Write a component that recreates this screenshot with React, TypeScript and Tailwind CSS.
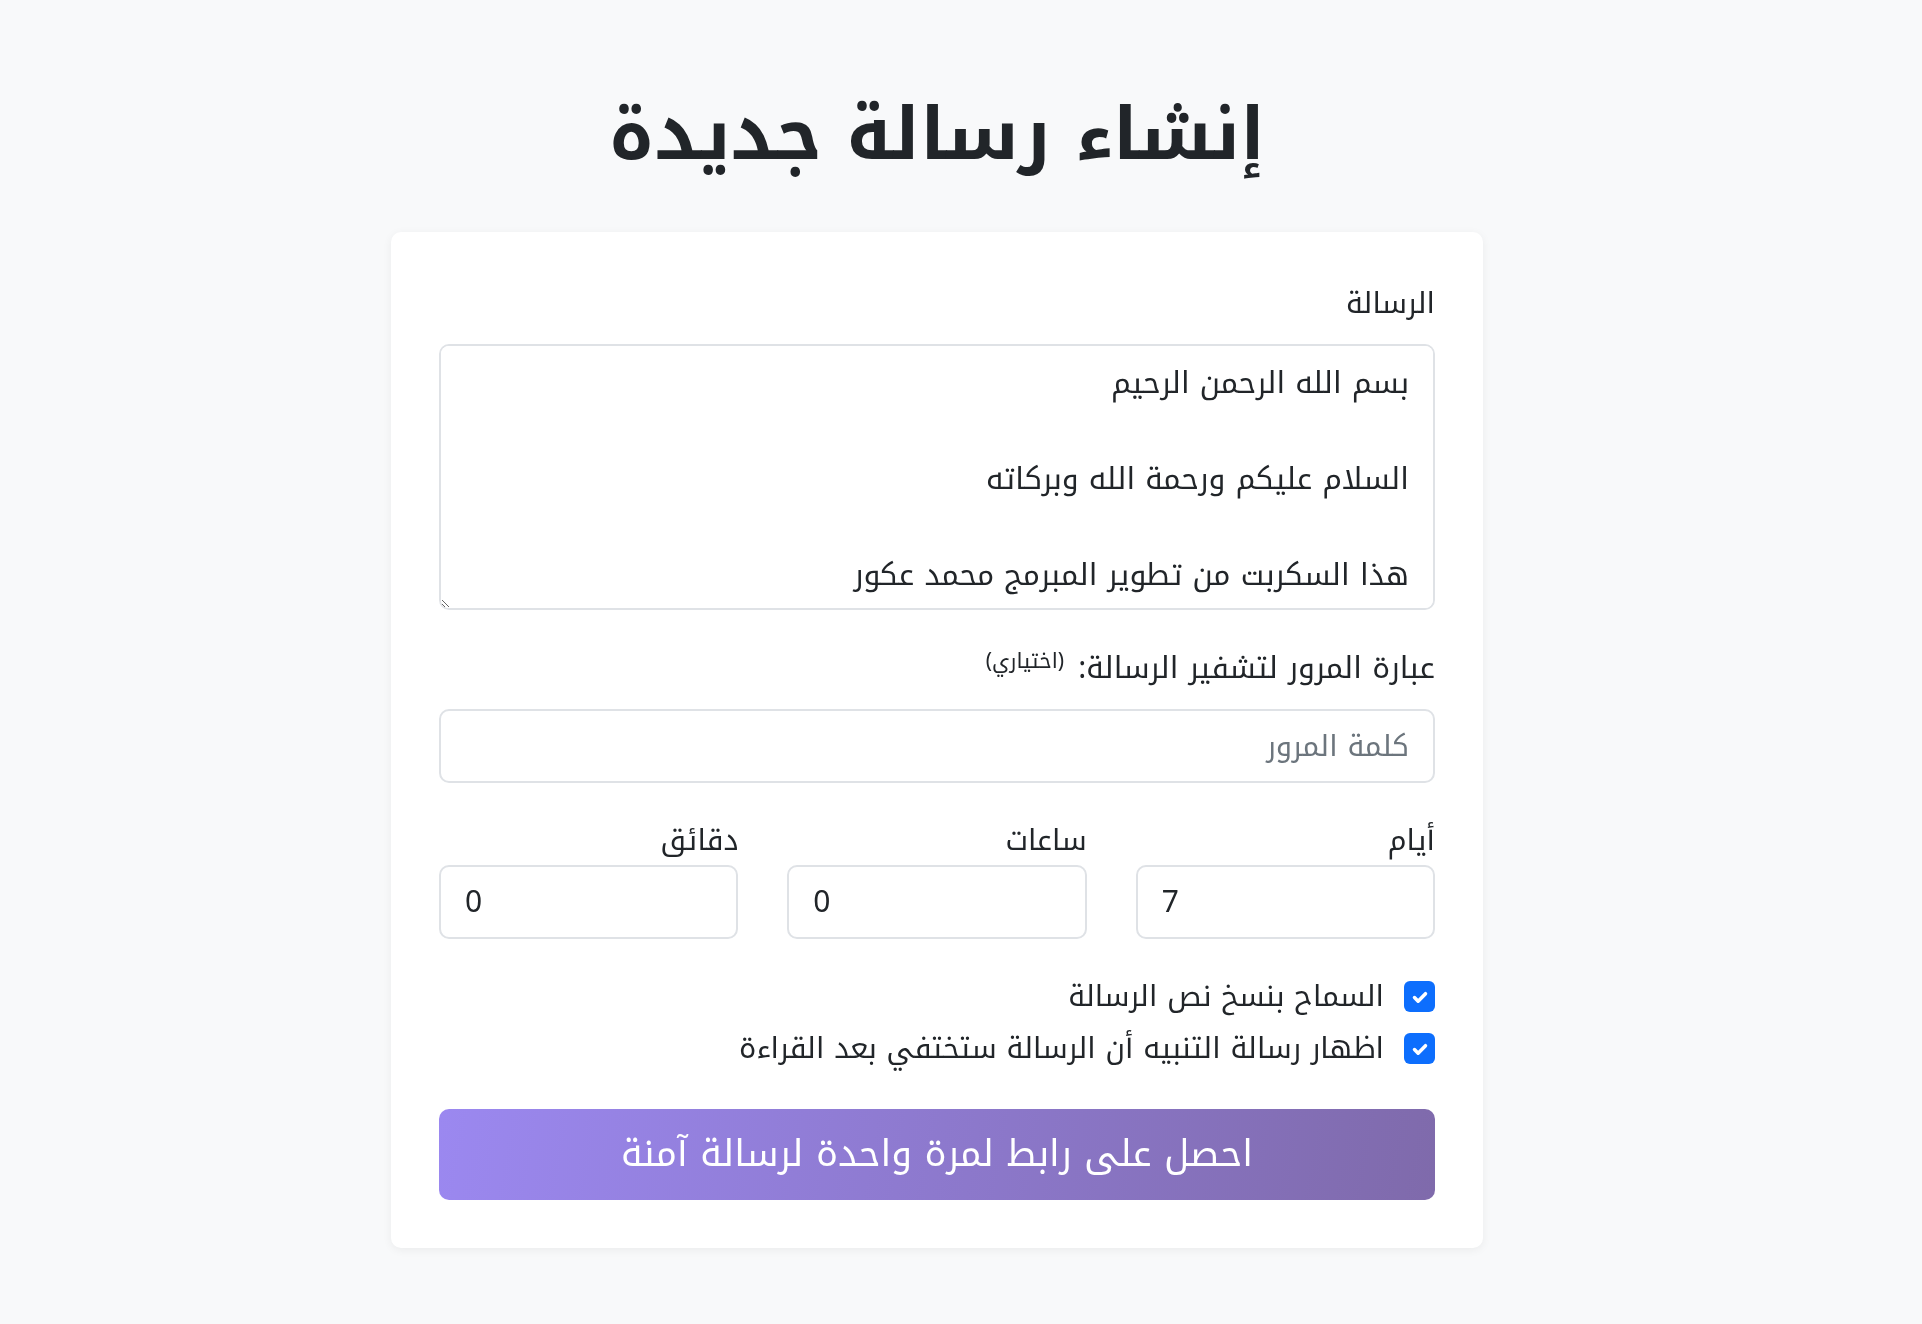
import React from "react";

const FONT = "font-['Noto_Kufi_Arabic','Noto_Sans_Arabic','DejaVu_Sans',sans-serif]";

function Check() {
  return (
    <span className="flex h-[31px] w-[31px] shrink-0 items-center justify-center rounded-[6px] bg-[#0d6efd]">
      <svg width="22" height="22" viewBox="0 0 20 20" fill="none">
        <path d="M5 10.5l3.3 3.3L15 7" stroke="#fff" strokeWidth="3.2" strokeLinecap="round" strokeLinejoin="round" />
      </svg>
    </span>
  );
}

export default function App() {
  const message = "بسم الله الرحمن الرحيم\n\nالسلام عليكم ورحمة الله وبركاته\n\nهذا السكربت من تطوير المبرمج محمد عكور";
  return (
    <div dir="rtl" className={`min-h-screen bg-[#f8f9fa] text-[#212529] ${FONT}`}>
      <div className="ml-0 mr-auto w-[1874px]">
        <h1 className="pt-[92px] text-center text-[72px] font-bold leading-[86px] text-[#212529]">إنشاء رسالة جديدة</h1>
        <div className="mx-auto mt-[54px] w-[1092px] rounded-[10px] bg-white px-[48px] pb-[48px] pt-[52px] shadow-[0_2px_10px_rgba(0,0,0,0.06)]">
          <label className="block text-[29px] leading-[40px]">الرسالة</label>
          <textarea
            readOnly
            defaultValue={message}
            className="mt-[20px] block h-[266px] w-full resize-y rounded-[10px] border-2 border-[#dfe2e6] bg-white px-[24px] pb-[11px] pt-[13px] text-[30px] leading-[48px] text-[#212529] outline-none"
          />
          <label className="mt-[38px] block text-[30px] leading-[40px]">
            عبارة المرور لتشفير الرسالة:{" "}
            <sup className="mr-[4px] text-[21px]">(اختياري)</sup>
          </label>
          <input
            type="password"
            placeholder="كلمة المرور"
            className="mt-[21px] block h-[74px] w-full rounded-[10px] border-2 border-[#dfe2e6] bg-white px-[24px] text-[29px] text-[#212529] outline-none placeholder:text-[#6c757d]"
          />
          <div className="mt-[38px] grid grid-cols-3 gap-x-[49px]">
            {[
              ["أيام", "7"],
              ["ساعات", "0"],
              ["دقائق", "0"],
            ].map(([label, val]) => (
              <div key={label}>
                <label className="block text-[29px] leading-[40px]">{label}</label>
                <input
                  type="number"
                  dir="ltr"
                  defaultValue={val}
                  className="mt-[4px] block h-[74px] w-full rounded-[10px] border-2 border-[#dfe2e6] bg-white px-[24px] text-left text-[30px] text-[#212529] outline-none"
                />
              </div>
            ))}
          </div>
          <div className="mt-[42px] flex flex-col gap-[21px]">
            <div className="flex items-center gap-[20px]">
              <Check />
              <span className="text-[29px] leading-[31px]">السماح بنسخ نص الرسالة</span>
            </div>
            <div className="flex items-center gap-[20px]">
              <Check />
              <span className="text-[29px] leading-[31px]">اظهار رسالة التنبيه أن الرسالة ستختفي بعد القراءة</span>
            </div>
          </div>
          <button className="mt-[45px] block h-[91px] w-full rounded-[10px] bg-[linear-gradient(100deg,#9b88f0,#7f6aab)] text-[37px] text-white">
            احصل على رابط لمرة واحدة لرسالة آمنة
          </button>
        </div>
      </div>
    </div>
  );
}
